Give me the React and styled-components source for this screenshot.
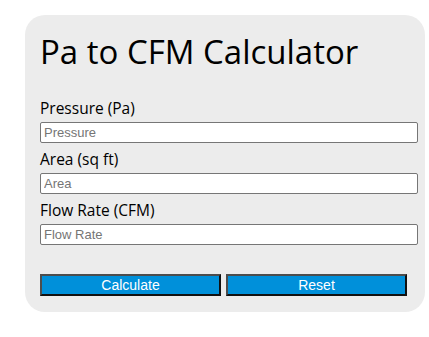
import styled, { createGlobalStyle } from "styled-components";

const Global = createGlobalStyle`
  html, body {
    margin: 0;
    padding: 0;
    background: #ffffff;
  }
  body {
    font-family: "Open Sans", "Noto Sans", sans-serif;
    color: #000;
  }
`;

const Card = styled.div`
  box-sizing: border-box;
  width: 400px;
  margin: 15px 0 0 25px;
  padding: 14px 8px 16px 15px;
  background: #ececec;
  border-radius: 20px;
`;

const Title = styled.h1`
  margin: 0 0 22px;
  font-size: 33px;
  font-weight: 400;
  line-height: 46px;
`;

const Label = styled.label`
  display: block;
  font-size: 15.5px;
  line-height: 22px;
  margin-bottom: 3px;
`;

const Input = styled.input`
  display: block;
  box-sizing: border-box;
  width: 378px;
  height: 21px;
  margin: 0 0 5px;
  padding: 1px 3px;
  border: 1px solid #767676;
  border-radius: 2px;
  background: #fff;
  font-family: "Liberation Sans", Arial, sans-serif;
  font-size: 13px;
  &::placeholder {
    color: #757575;
  }
`;

const Buttons = styled.div`
  display: flex;
  gap: 5px;
  margin-top: 29px;
`;

const Button = styled.button`
  box-sizing: border-box;
  width: 181px;
  height: 22px;
  padding: 0;
  background: #0090da;
  color: #fff;
  border: 2px solid;
  border-color: #4d4d4d #111 #111 #4d4d4d;
  font-family: "Liberation Sans", Arial, sans-serif;
  font-size: 14px;
  cursor: pointer;
`;

export default function App() {
  return (
    <>
      <Global />
      <Card>
        <Title>Pa to CFM Calculator</Title>
        <Label>Pressure (Pa)</Label>
        <Input placeholder="Pressure" />
        <Label>Area (sq ft)</Label>
        <Input placeholder="Area" />
        <Label>Flow Rate (CFM)</Label>
        <Input placeholder="Flow Rate" />
        <Buttons>
          <Button>Calculate</Button>
          <Button>Reset</Button>
        </Buttons>
      </Card>
    </>
  );
}
